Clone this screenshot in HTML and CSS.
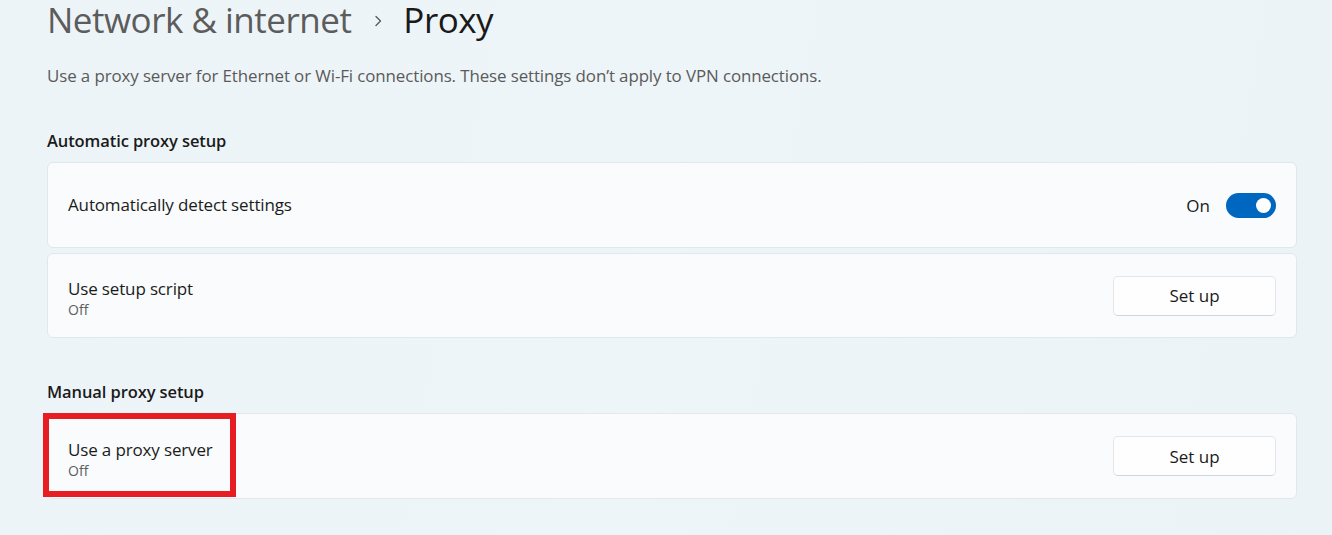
FILE: index.html
```html
<!DOCTYPE html>
<html lang="en">
<head>
<meta charset="utf-8">
<title>Proxy</title>
<link rel="stylesheet" href="styles.css">
</head>
<body>
<main class="page">
  <h1 class="breadcrumb">
    <span class="crumb-parent">Network &amp; internet</span>
    <svg class="chevron" width="9" height="12" viewBox="0 0 9 12"><path d="M2 1.5 L6.5 6 L2 10.5" fill="none" stroke="#5c5c5c" stroke-width="1.4" stroke-linecap="round" stroke-linejoin="round"/></svg>
    <span class="crumb-current">Proxy</span>
  </h1>
  <p class="desc">Use a proxy server for Ethernet or Wi-Fi connections. These settings don’t apply to VPN connections.</p>

  <h2 class="section-title">Automatic proxy setup</h2>
  <div class="card-group">
    <div class="card">
      <div class="card-text"><div class="card-title">Automatically detect settings</div></div>
      <div class="card-action">
        <span class="toggle-label">On</span>
        <span class="toggle"><span class="knob"></span></span>
      </div>
    </div>
    <div class="card">
      <div class="card-text two-line">
        <div class="card-title">Use setup script</div>
        <div class="card-sub">Off</div>
      </div>
      <div class="card-action"><button class="btn">Set up</button></div>
    </div>
  </div>

  <h2 class="section-title manual">Manual proxy setup</h2>
  <div class="card-group">
    <div class="card">
      <div class="card-text two-line">
        <div class="card-title">Use a proxy server</div>
        <div class="card-sub">Off</div>
      </div>
      <div class="card-action"><button class="btn">Set up</button></div>
      <div class="highlight-box"></div>
    </div>
  </div>
</main>
</body>
</html>
```

FILE: styles.css
```css
* { box-sizing: border-box; }
html, body {
  margin: 0;
  height: 100%;
}
body {
  background: linear-gradient(100deg, #edf4f8 0%, #eef5f8 50%, #ebf3f6 100%);
  font-family: "Open Sans", "Noto Sans", "Liberation Sans", sans-serif;
  color: #1b1b1b;
  overflow: hidden;
}
.page {
  padding: 0 35px 0 47px;
}
.breadcrumb {
  margin: 0;
  display: flex;
  align-items: center;
  font-weight: 500;
  font-size: 35px;
  line-height: 40px;
  letter-spacing: -0.5px;
}
.crumb-parent { color: #5c5c5c; }
.chevron { margin: 2px 20px 0 23px; }
.crumb-current { color: #1a1a1a; }
.desc {
  margin: 24px 0 0 0;
  font-size: 16.9px;
  line-height: 24px;
  color: #5a5a5a;
  letter-spacing: -0.1px;
}
.section-title {
  margin: 41px 0 0 0;
  font-size: 16.5px;
  line-height: 24px;
  font-weight: 600;
  color: #1b1b1b;
  letter-spacing: -0.1px;
}
.section-title.manual { margin-top: 42px; }
.card-group {
  margin-top: 9px;
  display: flex;
  flex-direction: column;
  gap: 5px;
}
.card {
  position: relative;
  display: flex;
  align-items: center;
  justify-content: space-between;
  height: 86px;
  padding: 0 20px 0 20px;
  background: #f9fbfc;
  border: 1px solid #e2e7ea;
  border-radius: 6px;
}
.card + .card { height: 85px; }
.card-text.two-line { padding-top: 6px; }
.card-title {
  font-size: 17px;
  line-height: 22px;
  color: #1b1b1b;
  letter-spacing: -0.15px;
}
.card-sub {
  font-size: 14px;
  line-height: 19px;
  color: #5f5f5f;
}
.card-action {
  display: flex;
  align-items: center;
}
.toggle-label {
  font-size: 17px;
  color: #1b1b1b;
  margin-right: 16px;
}
.toggle {
  position: relative;
  display: block;
  width: 50px;
  height: 25px;
  border-radius: 13px;
  background: #0067c0;
}
.knob {
  position: absolute;
  right: 5px;
  top: 5px;
  width: 15px;
  height: 15px;
  border-radius: 50%;
  background: #ffffff;
}
.btn {
  width: 163px;
  height: 40px;
  background: #fefefe;
  border: 1px solid #e4e6e8;
  border-bottom-color: #d2d5d8;
  border-radius: 5px;
  font-family: inherit;
  font-size: 17px;
  color: #1b1b1b;
  padding: 0;
}
.highlight-box {
  position: absolute;
  left: -5px;
  top: -1px;
  width: 193px;
  height: 84px;
  border: 6px solid #e61e24;
  pointer-events: none;
}
```
